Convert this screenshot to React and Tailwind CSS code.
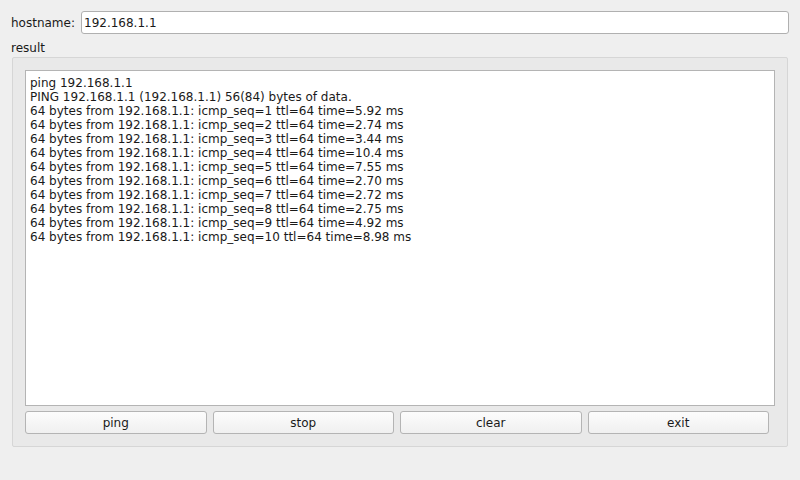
import React from "react";

const lines = [
  "ping 192.168.1.1",
  "PING 192.168.1.1 (192.168.1.1) 56(84) bytes of data.",
  "64 bytes from 192.168.1.1: icmp_seq=1 ttl=64 time=5.92 ms",
  "64 bytes from 192.168.1.1: icmp_seq=2 ttl=64 time=2.74 ms",
  "64 bytes from 192.168.1.1: icmp_seq=3 ttl=64 time=3.44 ms",
  "64 bytes from 192.168.1.1: icmp_seq=4 ttl=64 time=10.4 ms",
  "64 bytes from 192.168.1.1: icmp_seq=5 ttl=64 time=7.55 ms",
  "64 bytes from 192.168.1.1: icmp_seq=6 ttl=64 time=2.70 ms",
  "64 bytes from 192.168.1.1: icmp_seq=7 ttl=64 time=2.72 ms",
  "64 bytes from 192.168.1.1: icmp_seq=8 ttl=64 time=2.75 ms",
  "64 bytes from 192.168.1.1: icmp_seq=9 ttl=64 time=4.92 ms",
  "64 bytes from 192.168.1.1: icmp_seq=10 ttl=64 time=8.98 ms",
];

function Button({ label }) {
  return (
    <button className="flex-1 h-[23px] rounded-[3px] border border-[#b4b4b4] bg-gradient-to-b from-[#fcfcfc] to-[#f0f0f0] text-[#1a1a1a] text-[12px] leading-none">
      {label}
    </button>
  );
}

export default function App() {
  return (
    <div className="w-[800px] h-[480px] bg-[#efefef] text-[12px] text-[#1a1a1a] font-['DejaVu_Sans',sans-serif] flex flex-col">
      <div className="flex items-center pt-[11px] pl-[11px] pr-[11px]">
        <span className="w-[70px]">hostname:</span>
        <div className="flex-1 h-[23px] bg-white border border-[#b0b0b0] rounded-[3px] flex items-center px-[2px]">
          192.168.1.1
        </div>
      </div>
      <div className="pl-[11px] pt-[7px] h-[23px] leading-[14px]">result</div>
      <div className="mx-[12px] h-[390px] border border-[#d6d6d6] bg-[#e9e9e9] rounded-[2px] pl-[12px] pr-[12px] pt-[12px] flex flex-col">
        <div className="h-[336px] bg-white border border-[#b4b4b4] px-[4px] pt-[5px] leading-[14px] whitespace-pre">
          {lines.map((l, i) => (
            <div key={i}>{l}</div>
          ))}
        </div>
        <div className="flex gap-[6px] mt-[5px] pr-[6px]">
          <Button label="ping" />
          <Button label="stop" />
          <Button label="clear" />
          <Button label="exit" />
        </div>
      </div>
    </div>
  );
}
